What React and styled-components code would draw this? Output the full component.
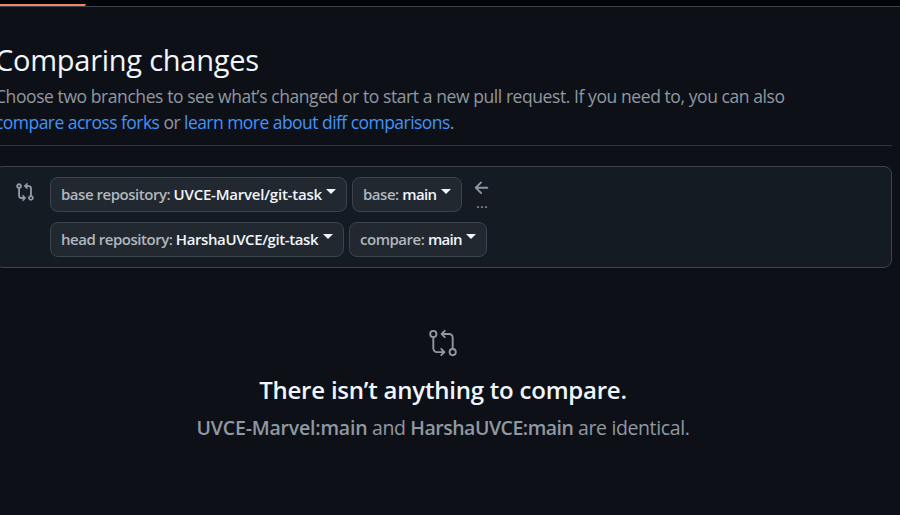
import React from "react";
import styled, { createGlobalStyle } from "styled-components";
import { GoGitCompare } from "react-icons/go";

const GlobalStyle = createGlobalStyle`
  * { box-sizing: border-box; }
  html, body { margin: 0; height: 515px; overflow: hidden; background: #0d1117; }
  body { font-family: "Open Sans", "Noto Sans", sans-serif; color: #f0f6fc; }
`;

const Page = styled.div`
  width: 900px;
  height: 515px;
  overflow: hidden;
  background: #0d1117;
`;

const TabStrip = styled.div`
  height: 7px;
  background: #010409;
  border-bottom: 1px solid #3d444d;
`;

const ActiveTab = styled.div`
  width: 86px;
  height: 6px;
  border-bottom: 2px solid #f78166;
  border-radius: 0 0 2px 0;
`;

const Content = styled.main`
  width: 897px;
  margin-left: -5px;
`;

const Intro = styled.header`
  height: 139px;
  padding-top: 30px;
  border-bottom: 1px solid #2f353d;
`;

const Title = styled.h1`
  margin: 0;
  font-size: 29px;
  line-height: 46px;
  font-weight: 400;
  letter-spacing: -0.25px;
  white-space: nowrap;
`;

const Description = styled.p`
  margin: 0;
  color: #9198a1;
  font-size: 17.5px;
  line-height: 26px;
  letter-spacing: -0.42px;
  white-space: nowrap;
`;

const LinkLine = styled.span`
  letter-spacing: -0.54px;
`;

const Link = styled.a`
  color: #4493f8;
`;

const RangePanel = styled.section`
  display: flex;
  height: 102px;
  margin-top: 20px;
  padding: 10px 20px;
  border: 1px solid #3d444d;
  border-radius: 8px;
  background: #151b23;
`;

const RangeIcon = styled.svg`
  width: 20px;
  height: 20px;
  margin: 5px 15px 0 -1px;
  fill: #9198a1;
  flex: none;
`;

const Rows = styled.div`
  display: grid;
  gap: 10px;
  align-content: start;
`;

const Row = styled.div`
  display: flex;
  gap: 5px;
  height: 35px;
`;

const Picker = styled.button`
  display: flex;
  align-items: center;
  width: ${(p) => p.$width}px;
  height: 35px;
  padding: 0 10px 2px;
  border: 1px solid #3d444d;
  border-radius: 8px;
  background: #212830;
  color: #f0f6fc;
  font: 600 15px/24px "Open Sans", "Noto Sans", sans-serif;
  letter-spacing: ${(p) => p.$spacing}px;
  white-space: pre;
`;

const Label = styled.span`
  color: #b1b7be;
  letter-spacing: -0.47px;
`;

const Caret = styled.span`
  margin: -4px 0 0 auto;
  border: 5px solid transparent;
  border-top-color: #f0f6fc;
  border-bottom: 0;
`;

const Direction = styled.div`
  display: flex;
  flex-direction: column;
  align-items: center;
  width: 20px;
  margin-left: 5px;
  color: #9198a1;
  font-size: 15px;
  line-height: 8px;
`;

const ArrowIcon = styled.svg`
  width: 20px;
  height: 20px;
  margin-top: 1px;
  fill: currentColor;
`;

const Blank = styled.section`
  display: flex;
  flex-direction: column;
  align-items: center;
  padding-top: 60px;
  margin-right: 1px;
  color: #9198a1;
`;

const BlankTitle = styled.h2`
  margin: 14px 0 0;
  color: #f0f6fc;
  font-size: 24px;
  line-height: 36px;
  font-weight: 600;
  letter-spacing: -0.22px;
`;

const BlankText = styled.p`
  margin: 5px 0 0;
  font-size: 19.5px;
  line-height: 30px;
  letter-spacing: -0.38px;
  white-space: nowrap;
`;

const BranchName = styled.strong`
  font-weight: 600;
  letter-spacing: ${(p) => p.$spacing}px;
`;

const Selector = ({ label, value, width, spacing }) => (
  <Picker $width={width} $spacing={spacing}>
    <Label>{label}: </Label>
    <span>{value}</span>
    <Caret />
  </Picker>
);

export default function App() {
  return (
    <Page>
      <GlobalStyle />
      <TabStrip><ActiveTab /></TabStrip>
      <Content>
        <Intro>
          <Title>Comparing changes</Title>
          <Description>
            Choose two branches to see what’s changed or to start a new pull request. If you need to, you can also<br />
            <LinkLine>
              <Link>compare across forks</Link> or <Link>learn more about diff comparisons</Link>.
            </LinkLine>
          </Description>
        </Intro>
        <RangePanel>
          <RangeIcon viewBox="0 0 16 16">
            <path d="M9.573.677A.25.25 0 0 1 10 .854V2.5h1A2.5 2.5 0 0 1 13.5 5v5.628a2.251 2.251 0 1 1-1.5 0V5a1 1 0 0 0-1-1h-1v1.646a.25.25 0 0 1-.427.177L7.177 3.427a.25.25 0 0 1 0-.354ZM6 12v-1.646a.25.25 0 0 1 .427-.177l2.396 2.396a.25.25 0 0 1 0 .354l-2.396 2.396A.25.25 0 0 1 6 15.146V13.5H5A2.5 2.5 0 0 1 2.5 11V5.372a2.25 2.25 0 1 1 1.5 0V11a1 1 0 0 0 1 1ZM4 3.25a.75.75 0 1 0-1.5 0 .75.75 0 0 0 1.5 0ZM12.75 12a.75.75 0 1 0 0 1.5.75.75 0 0 0 0-1.5Z" />
          </RangeIcon>
          <Rows>
            <Row>
              <Selector label="base repository" value="UVCE-Marvel/git-task" width={297} spacing={-0.22} />
              <Selector label="base" value="main" width={110} spacing={-0.6} />
              <Direction>
                <ArrowIcon viewBox="0 0 16 16">
                  <path d="M7.78 12.53a.75.75 0 0 1-1.06 0L2.47 8.28a.75.75 0 0 1 0-1.06l4.25-4.25a.751.751 0 0 1 1.042.018.751.751 0 0 1 .018 1.042L4.81 7h7.44a.75.75 0 0 1 0 1.5H4.81l2.97 2.97a.75.75 0 0 1 0 1.06Z" />
                </ArrowIcon>
                <span>...</span>
              </Direction>
            </Row>
            <Row>
              <Selector label="head repository" value="HarshaUVCE/git-task" width={294} spacing={-0.4} />
              <Selector label="compare" value="main" width={138} spacing={-0.7} />
            </Row>
          </Rows>
        </RangePanel>
        <Blank>
          <GoGitCompare size={30} />
          <BlankTitle>There isn’t anything to compare.</BlankTitle>
          <BlankText>
            <BranchName $spacing={-0.2}>UVCE-Marvel:main</BranchName> and{" "}
            <BranchName $spacing={-0.5}>HarshaUVCE:main</BranchName> are identical.
          </BlankText>
        </Blank>
      </Content>
    </Page>
  );
}
